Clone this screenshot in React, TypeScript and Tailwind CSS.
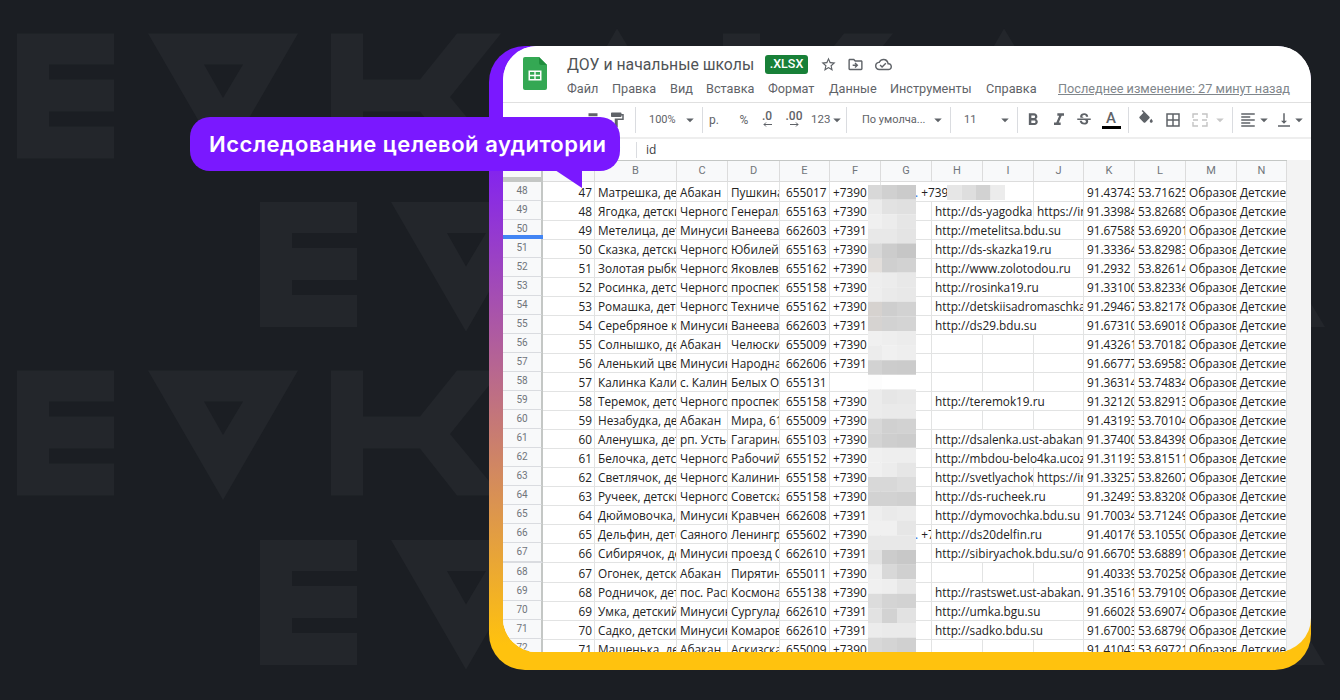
import React from "react";
import {
  MdOutlineStarBorder, MdOutlineDriveFileMove, MdOutlineCloudDone, MdPrint, MdFormatPaint, MdArrowDropDown,
  MdFormatBold, MdFormatItalic, MdStrikethroughS, MdBorderAll, MdFormatAlignLeft, MdVerticalAlignBottom,
} from "react-icons/md";

const Letters = () => (
  <>
    <path d="M0 0H97V31H32V46H97V78H32V93H97V125H0Z" />
    <path fillRule="evenodd" d="M131 0H281L206 129.5ZM187 31H226L206 64.5Z" />
    <path d="M314 0H346V46H403L440 0H484L433 63.5L484 125H440L403 78H346V125H314Z" />
    <path fillRule="evenodd" d="M525 125H678L600 -5ZM581 93H621L600 60Z" />
    <path d="M706 0H743V46H790L827 0H876L825 63.5L876 125H827L790 78H743V125H706Z" />
    <path fillRule="evenodd" d="M912 125H1065L987 -5ZM968 93H1008L987 60Z" />
  </>
);

const Watermark = () => (
  <svg className="absolute inset-0" width="1340" height="700" fill="#23262b">
    <g transform="translate(17 33.5)"><Letters /></g>
    <g transform="translate(260 202)"><Letters /></g>
    <g transform="translate(17 370.5)"><Letters /></g>
    <g transform="translate(260 540)"><Letters /></g>
  </svg>
);

const SheetsLogo = () => (
  <svg width="24" height="33" viewBox="0 0 24 33">
    <path d="M2 0H16L24 8V31a2 2 0 0 1-2 2H2a2 2 0 0 1-2-2V2a2 2 0 0 1 2-2Z" fill="#34a853" />
    <path d="M16 0L24 8H18a2 2 0 0 1-2-2Z" fill="#1f8e3d" />
    <path fillRule="evenodd" d="M5.5 13.5H18.5V23.5H5.5ZM7 15V17.7H11.3V15ZM12.7 15V17.7H17V15ZM7 19.2V22H11.3V19.2ZM12.7 19.2V22H17V19.2Z" fill="#fff" />
  </svg>
);

const Sep = ({ ml }: { ml: string }) => <div className={`w-px h-[26px] bg-[#dadce0] ${ml}`} />;
const Caret = ({ ml, light }: { ml: string; light?: boolean }) => (
  <div className={`w-2 flex justify-center ${ml}`}>
    <MdArrowDropDown className={`shrink-0 ${light ? "text-[#c8c8c8]" : "text-[#5f6368]"}`} size={18} />
  </div>
);
const Tool = ({ ml, children }: { ml: string; children: React.ReactNode }) => (
  <div className={`w-[18px] flex justify-center text-[#5f6368] ${ml}`}>{children}</div>
);
const Decimal = ({ className, text, dir }: { className: string; text: string; dir: "l" | "r" }) => (
  <div className={`${className} flex flex-col items-center text-[12px] font-medium leading-[11px] pb-[2px]`}>
    <span className="underline decoration-transparent">{text}</span>
    <svg width="9" height="5" viewBox="0 0 9 5" fill="none" stroke="#5f6368" strokeWidth="1">
      {dir === "l" ? <path d="M9 2.5H1M3 .5L1 2.5L3 4.5" /> : <path d="M0 2.5H8M6 .5L8 2.5L6 4.5" />}
    </svg>
  </div>
);

const Toolbar = () => (
  <div className="h-[34px] pl-[78px] flex items-center text-[11px] text-[#5f6368] whitespace-nowrap font-['Roboto',sans-serif]">
    <div className="w-6 flex justify-center text-[#5f6368]"><MdPrint size={18} /></div>
    <div className="w-6 flex justify-center text-[#5f6368]"><MdFormatPaint size={18} /></div>
    <Sep ml="ml-[6px]" />
    <div className="ml-[13px] w-[26px]">100%</div>
    <Caret ml="ml-[11px]" />
    <Sep ml="ml-[8px]" />
    <div className="ml-[5px] w-3 text-center text-[12px]">р.</div>
    <div className="ml-[18px] w-3 text-center text-[12px]">%</div>
    <Decimal className="ml-[9px] w-4" text=".0" dir="l" />
    <Decimal className="ml-[10px] w-[18px]" text=".00" dir="r" />
    <div className="ml-2 w-[21px] text-[11.5px]">123</div>
    <Caret ml="ml-px" />
    <Sep ml="ml-[5px]" />
    <div className="ml-[15px] w-[63px] overflow-hidden">По умолча...</div>
    <Caret ml="ml-[9px]" />
    <Sep ml="ml-2" />
    <div className="ml-[13px] w-[11px]">11</div>
    <Caret ml="ml-[26px]" />
    <Sep ml="ml-2" />
    <Tool ml="ml-[6px]"><MdFormatBold className="shrink-0" size={20} /></Tool>
    <Tool ml="ml-2"><MdFormatItalic className="shrink-0" size={20} /></Tool>
    <Tool ml="ml-[7px]"><MdStrikethroughS className="shrink-0" size={18} /></Tool>
    <div className="ml-2 w-5 flex flex-col items-center text-[#5f6368]">
      <span className="text-[15px] font-medium leading-[15px]">A</span>
      <span className="w-[19px] h-[3px] bg-black" />
    </div>
    <Sep ml="ml-[7px]" />
    <Tool ml="ml-2">
      <svg className="shrink-0 -mt-[3px]" width="18" height="18" viewBox="0 0 24 24" fill="#5f6368">
        <path d="M16.56 8.94L7.62 0 6.21 1.41l2.38 2.38-5.15 5.15c-.59.59-.59 1.54 0 2.12l5.5 5.5c.29.29.68.44 1.06.44s.77-.15 1.06-.44l5.5-5.5c.59-.58.59-1.53 0-2.12zM19 11.5s-2 2.17-2 3.5c0 1.1.9 2 2 2s2-.9 2-2c0-1.33-2-3.5-2-3.5z" />
      </svg>
    </Tool>
    <Tool ml="ml-[9px]"><MdBorderAll className="shrink-0" size={18} /></Tool>
    <Tool ml="ml-[9px]">
      <svg width="16" height="14" viewBox="0 0 16 14" fill="none" stroke="#c4c4c4" strokeWidth="1.4">
        <path d="M1 5V1H6M10 1H15V5M1 9V13H6M10 13H15V9M1 7H6M10 7H15" />
      </svg>
    </Tool>
    <Caret ml="ml-[7px]" light />
    <Sep ml="ml-2" />
    <Tool ml="ml-[6px]"><MdFormatAlignLeft className="shrink-0" size={18} /></Tool>
    <Caret ml="ml-[3px]" />
    <Tool ml="ml-[7px]"><MdVerticalAlignBottom className="shrink-0" size={18} /></Tool>
    <Caret ml="ml-[2px]" />
  </div>
);

const Header = () => (
  <div className="font-['Roboto',sans-serif]">
    <div className="h-14 pl-5 flex">
      <div className="pt-[11px] w-11 shrink-0"><SheetsLogo /></div>
      <div className="flex flex-col">
        <div className="h-[37px] flex items-center text-[#5f6368]">
          <span className="text-[15.8px] text-[#505356] w-[198px] whitespace-nowrap">ДОУ и начальные школы</span>
          <span className="w-[43px] h-[19px] rounded-[3px] bg-[#188038] text-white text-[12.5px] font-medium flex items-center justify-center">.XLSX</span>
          <MdOutlineStarBorder className="ml-3 shrink-0" size={17} />
          <MdOutlineDriveFileMove className="ml-[10px] shrink-0" size={17} />
          <MdOutlineCloudDone className="ml-[11px] shrink-0" size={17} />
        </div>
        <div className="flex text-[12.7px] text-[#5f6368] whitespace-nowrap leading-[15px] -mt-[2px]">
          <span className="w-[45px]">Файл</span>
          <span className="w-[58px]">Правка</span>
          <span className="w-9">Вид</span>
          <span className="w-[62px]">Вставка</span>
          <span className="w-[61px]">Формат</span>
          <span className="w-[61px]">Данные</span>
          <span className="w-24">Инструменты</span>
          <span className="w-[72px]">Справка</span>
          <span className="underline text-[#80868b]">Последнее изменение: 27 минут назад</span>
        </div>
      </div>
    </div>
    <div className="border-t border-[#e0e0e0] border-b-2 border-b-[#eeeeee]"><Toolbar /></div>
    <div className="h-[21px] flex items-center text-[12px]">
      <span className="ml-[107px] w-[26px] italic text-[#9aa0a6]">fx</span>
      <span className="w-px h-4 bg-[#dadce0]" />
      <span className="ml-[9px] text-[#3c4043] font-['Open_Sans',sans-serif]">id</span>
    </div>
  </div>
);

const COLS = "grid-cols-[40px_52px_82px_51px_52px_50px_51px_51px_51px_51px_50px_51px_51px_51px_50px]";

type Row = [string, string, string, string, string, string, string, string];
const rows: Row[] = [
  ["Матрешка, детский сад", "Абакан", "Пушкина, 1", "655017", "+7390", "", "91.43743", "53.71625"],
  ["Ягодка, детский сад", "Черногорск", "Генерала Тихонова", "655163", "+7390", "http://ds-yagodka|https://in", "91.33984", "53.82689"],
  ["Метелица, детский сад", "Минусинск", "Ванеева, 5", "662603", "+7391", "http://metelitsa.bdu.su", "91.67588", "53.69201"],
  ["Сказка, детский сад", "Черногорск", "Юбилейная", "655163", "+7390", "http://ds-skazka19.ru", "91.33364", "53.82983"],
  ["Золотая рыбка, сад", "Черногорск", "Яковлева, 1", "655162", "+7390", "http://www.zolotodou.ru", "91.2932", "53.82614"],
  ["Росинка, детский сад", "Черногорск", "проспект Космонавтов", "655158", "+7390", "http://rosinka19.ru", "91.33100", "53.82336"],
  ["Ромашка, детский сад", "Черногорск", "Техническая", "655162", "+7390", "http://detskiisadromaschka.ru", "91.29467", "53.82178"],
  ["Серебряное копытце", "Минусинск", "Ванеева, 7", "662603", "+7391", "http://ds29.bdu.su", "91.67310", "53.69018"],
  ["Солнышко, детский сад", "Абакан", "Челюскинцев", "655009", "+7390", "", "91.43261", "53.70182"],
  ["Аленький цветочек", "Минусинск", "Народная, 1", "662606", "+7391", "", "91.66777", "53.69583"],
  ["Калинка Калинка", "с. Калинино", "Белых Облаков", "655131", "", "", "91.36314", "53.74834"],
  ["Теремок, детский сад", "Черногорск", "проспект Космонавтов", "655158", "+7390", "http://teremok19.ru", "91.32120", "53.82913"],
  ["Незабудка, детский сад", "Абакан", "Мира, 61", "655009", "+7390", "", "91.43193", "53.70104"],
  ["Аленушка, детский сад", "рп. Усть-Абакан", "Гагарина, 1", "655103", "+7390", "http://dsalenka.ust-abakan.ru", "91.37400", "53.84398"],
  ["Белочка, детский сад", "Черногорск", "Рабочий, 1", "655152", "+7390", "http://mbdou-belo4ka.ucoz.ru", "91.31193", "53.81511"],
  ["Светлячок, детский сад", "Черногорск", "Калинина, 1", "655158", "+7390", "http://svetlyachok|https://in", "91.33257", "53.82607"],
  ["Ручеек, детский сад", "Черногорск", "Советская, 1", "655158", "+7390", "http://ds-rucheek.ru", "91.32493", "53.83208"],
  ["Дюймовочка, детский", "Минусинск", "Кравченко", "662608", "+7391", "http://dymovochka.bdu.su", "91.70034", "53.71249"],
  ["Дельфин, детский сад", "Саяногорск", "Ленинградский", "655602", "+7390", "http://ds20delfin.ru", "91.40176", "53.10550"],
  ["Сибирячок, детский сад", "Минусинск", "проезд Сибирский", "662610", "+7391", "http://sibiryachok.bdu.su/o", "91.66705", "53.68891"],
  ["Огонек, детский сад", "Абакан", "Пирятинская", "655011", "+7390", "", "91.40339", "53.70258"],
  ["Родничок, детский сад", "пос. Расцвет", "Космонавтов", "655138", "+7390", "http://rastswet.ust-abakan.ru", "91.35161", "53.79109"],
  ["Умка, детский сад", "Минусинск", "Сургуладзе", "662610", "+7391", "http://umka.bgu.su", "91.66028", "53.69074"],
  ["Садко, детский сад", "Минусинск", "Комарова, 1", "662610", "+7391", "http://sadko.bdu.su", "91.67003", "53.68796"],
  ["Машенька, детский сад", "Абакан", "Аскизская", "655009", "+7390", "", "91.41043", "53.69721"],
];

const cell = "border-r border-b border-[#e2e3e3] overflow-hidden whitespace-nowrap px-[2px] leading-[21px]";

const SheetRow = ({ r, i }: { r: Row; i: number }) => {
  const [b, c, d, e, f, link, k, l] = r;
  const [h, j] = link.split("|");
  return (
    <div className={`grid ${COLS} h-[19.05px]`}>
      <div className="relative bg-[#f8f9fa] border-r-2 border-b-2 border-r-[#c4c7c5] border-b-[#dadce0] text-center text-[10px] text-[#70757a] leading-[18px] font-['Roboto',sans-serif]">
        {i + 48}
        {i === 2 && <div className="absolute left-0 -right-[2px] top-[15px] h-1 bg-[#4285f4]" />}
      </div>
      <div className={`${cell} text-right`}>{i + 47}</div>
      <div className={`${cell} pl-[3px]`}>{b}</div>
      <div className={`${cell} pl-[3px]`}>{c}</div>
      <div className={`${cell} pl-[3px]`}>{d}</div>
      <div className={`${cell} pl-[6px]`}>{e}</div>
      <div className={`${cell} pl-[3px]`}>{f}</div>
      {i === 18 ? <div className={`${cell} pl-[34px]`}><span className="text-[#1a73e8]">.</span> +7</div> : i === 0 ? <div className={`${cell} pl-[34px] col-span-3`}><span className="text-[#1a73e8]">.</span> +739</div> : <div className={cell} />}
      {i === 0 ? null : h && j ? (
        <>
          <div className={`${cell} pl-[3px] col-span-2`}>{h}</div>
          <div className={`${cell} pl-[3px]`}>{j}</div>
        </>
      ) : h ? (
        <div className={`${cell} pl-[3px] col-span-3`}>{h}</div>
      ) : (
        <>
          <div className={cell} />
          <div className={cell} />
          <div className={cell} />
        </>
      )}
      {i === 0 && <div className={cell} />}
      <div className={`${cell} pl-[3px]`}>{k}</div>
      <div className={`${cell} pl-[3px]`}>{l}</div>
      <div className={`${cell} pl-[3px]`}>Образовательные</div>
      <div className={`${cell} pl-[3px]`}>Детские сады</div>
    </div>
  );
};

const ColHead = () => (
  <div className={`grid ${COLS} h-[21.6px] border-t border-[#c4c7c5] bg-[#f8f9fa] text-[11px] text-[#70757a] font-['Roboto',sans-serif]`}>
    <div className="border-r-2 border-b-[5px] border-[#c4c7c5]" />
    {["", "B", "C", "D", "E", "F", "G", "H", "I", "J", "K", "L", "M", "N"].map((c, i) => (
      <div key={i} className="border-r border-b border-[#dcdcdc] text-center leading-[20px]">{c}</div>
    ))}
  </div>
);

const blur: string[][] = [
  ["#d8d8d8","#d0d0d0","#cbcbcb"],["#ececec","#e2e2e2","#e0e0e0"],["#f0f0f0","#ececec","#e6e6e6"],["#e8e8e8","#e8e8e8","#e4e4e4"],
  ["#d8d8d8","#cccccc","#c6c6c6"],["#e2dedb","#cfcfcf","#d2d2d2"],["#eeeeee","#ececec","#e8e8e8"],["#eeeeee","#eaeaea","#e8e8e8"],
  ["#d6d2cf","#cecece","#d2d2d2"],["#d6d3d1","#d2d2d2","#d4d4d4"],["#f0f0f0","#eeeeee","#ececec"],["#ececec","#f0f0f0","#eeeeee"],
  ["#d2d2d2","#cccccc","#cbcbcb"],["#fdfdfd","#ffffff","#ffffff"],["#ececec","#e6e6e6","#e8e8e8"],["#ececec","#eaeaea","#eaeaea"],
  ["#d8d8d8","#d0d0d0","#d2d2d2"],["#d4d4d4","#cecece","#cccccc"],["#f0f0f0","#eeeeee","#eeeeee"],["#f0f0f0","#ececec","#e6e6e6"],
  ["#d8d8d8","#d8d8d8","#dcdcdc"],["#d2d2d2","#d2d2d2","#d0d0d0"],["#eeeeee","#eaeaea","#ececec"],["#f0f0f0","#f0f0f0","#e6e6e6"],
  ["#e8e8e8","#e8e8e8","#e8e8e8"],["#e2e2e2","#cccccc","#c8c8c8"],["#eeeeee","#d8d8d8","#d0d0d0"],["#f0f0f0","#eeeeee","#e6e6e6"],
  ["#dcdcdc","#d4d4d4","#d2d2d2"],["#e2e2e2","#d2d2d2","#e2e2e2"],["#ececec","#eaeaea","#eaeaea"],["#d8d8d8","#d4d4d4","#d0d0d0"],
];
const colX = [0, 14, 29, 48];

const Blur = () => (
  <svg className="absolute left-[365px] top-[139px]" width="48" height="470">
    {blur.map((r, y) => r.map((c, x) => (
      <rect key={`${x}-${y}`} x={colX[x]} y={y * 14.6} width={colX[x + 1] - colX[x]} height="14.7" fill={c} />
    )))}
  </svg>
);

const Blur2 = () => (
  <svg className="absolute left-[444px] top-[139px]" width="58" height="15">
    {["#e6e6e6", "#dedede", "#d2d2d2", "#ececec"].map((c, i) => <rect key={i} x={i * 14.5} width="14.6" height="15" fill={c} />)}
  </svg>
);

const Bubble = () => (
  <div className="absolute left-[190px] top-[117px] w-[430px] h-[54px] rounded-[20px] bg-[#7a18ff] flex items-center pl-[19px] text-white text-[22px] font-semibold tracking-[0.53px] whitespace-nowrap font-['Inter',sans-serif]">
    Исследование целевой аудитории
    <svg className="absolute left-[365px] top-[53px]" width="27" height="19"><path d="M0 0H27V18Z" fill="#7a18ff" /></svg>
  </div>
);

export default function App() {
  return (
    <div className="relative w-[1340px] h-[700px] overflow-hidden bg-[#1b1e23]">
      <Watermark />
      <div className="relative pl-[489px] pt-[46px]">
        <div className="w-[822px] h-[624px] rounded-[36px] pl-[14px] pb-[18px] bg-[linear-gradient(to_bottom,#7a18ff_0%,#7a18ff_14%,#ffc20e_96%)]">
          <div className="relative h-full rounded-[34px] overflow-hidden bg-[#f3f3f3] text-[11.8px] text-[#222222] font-['Open_Sans',sans-serif]">
            <div className="bg-white"><Header /></div>
            <div className="bg-white w-[784px]">
              <ColHead />
              {rows.map((r, i) => <SheetRow key={i} r={r} i={i} />)}
            </div>
            <Blur />
            <Blur2 />
          </div>
        </div>
      </div>
      <Bubble />
    </div>
  );
}
